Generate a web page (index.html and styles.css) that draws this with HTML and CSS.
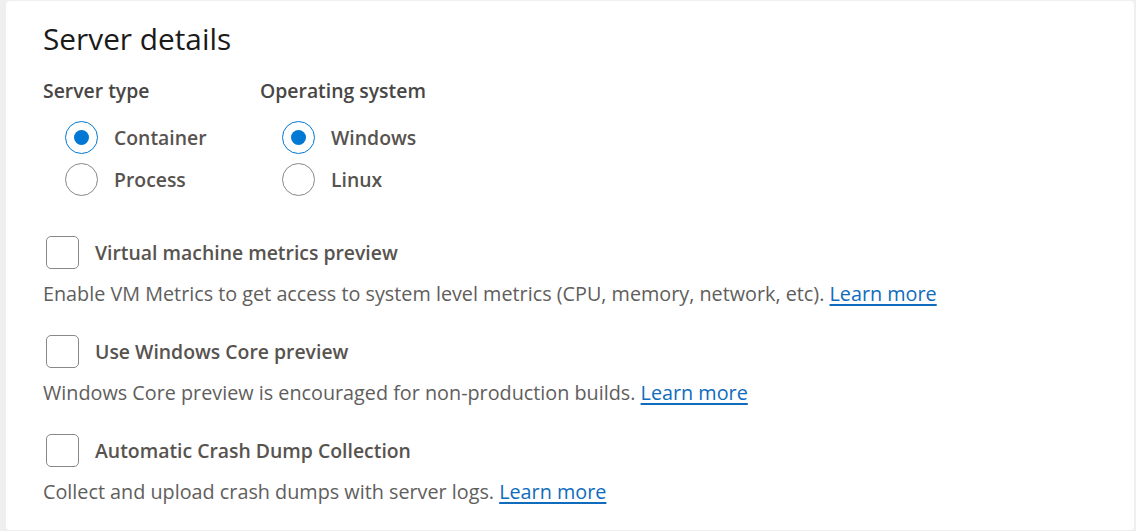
FILE: index.html
```html
<!DOCTYPE html>
<html lang="en">
<head>
<meta charset="utf-8">
<title>Server details</title>
<link rel="stylesheet" href="styles.css">
</head>
<body>
<main class="card">
  <h1 class="title">Server details</h1>
  <div class="groups">
    <div class="group">
      <div class="group-label">Server type</div>
      <div class="radio-list">
        <label class="radio"><span class="circle checked"></span><span class="radio-text">Container</span></label>
        <label class="radio"><span class="circle"></span><span class="radio-text">Process</span></label>
      </div>
    </div>
    <div class="group">
      <div class="group-label">Operating system</div>
      <div class="radio-list">
        <label class="radio"><span class="circle checked"></span><span class="radio-text">Windows</span></label>
        <label class="radio"><span class="circle"></span><span class="radio-text">Linux</span></label>
      </div>
    </div>
  </div>

  <div class="option">
    <label class="check"><span class="box"></span><span class="check-text">Virtual machine metrics preview</span></label>
    <p class="desc">Enable VM Metrics to get access to system level metrics (CPU, memory, network, etc). <a href="#" class="link">Learn more</a></p>
  </div>
  <div class="option">
    <label class="check"><span class="box"></span><span class="check-text">Use Windows Core preview</span></label>
    <p class="desc">Windows Core preview is encouraged for non-production builds. <a href="#" class="link">Learn more</a></p>
  </div>
  <div class="option">
    <label class="check"><span class="box"></span><span class="check-text">Automatic Crash Dump Collection</span></label>
    <p class="desc">Collect and upload crash dumps with server logs. <a href="#" class="link">Learn more</a></p>
  </div>
</main>
</body>
</html>
```

FILE: styles.css
```css
* { box-sizing: border-box; }

html, body {
  margin: 0;
  padding: 0;
  background: #efefef;
  font-family: "Open Sans", "Noto Sans", Arial, sans-serif;
}

.card {
  margin: 1px 2px 0 6px;
  height: 529px;
  background: #ffffff;
  border-radius: 4px;
  padding: 18px 37px 0 37px;
  overflow: hidden;
}

.title {
  margin: 0;
  font-size: 29.8px;
  font-weight: 400;
  line-height: 40px;
  color: #1b1a19;
}

.groups {
  display: flex;
  margin-top: 19px;
}

.group:first-child {
  width: 217px;
}

.group-label {
  font-size: 19.4px;
  font-weight: 600;
  line-height: 26px;
  color: #484644;
}

.radio-list {
  display: flex;
  flex-direction: column;
  gap: 9px;
  margin-top: 17px;
  padding-left: 22px;
}

.radio {
  display: flex;
  align-items: center;
  gap: 16px;
  height: 33px;
}

.circle {
  width: 33px;
  height: 33px;
  border-radius: 50%;
  border: 1px solid #8a8886;
  display: flex;
  align-items: center;
  justify-content: center;
  flex: none;
}

.circle.checked {
  border-color: #0078d4;
}

.circle.checked::after {
  content: "";
  width: 15px;
  height: 15px;
  border-radius: 50%;
  background: #0078d4;
}

.radio-text, .check-text {
  font-size: 19.4px;
  font-weight: 600;
  color: #57534f;
}

.option {
  margin-top: 40px;
}

.option + .option {
  margin-top: 27px;
}

.check {
  display: flex;
  align-items: center;
  gap: 16px;
  padding-left: 3px;
  height: 33px;
}

.box {
  width: 33px;
  height: 33px;
  border: 1px solid #8a8886;
  border-radius: 5px;
  flex: none;
}

.desc {
  margin: 11px 0 0 0;
  font-size: 19.8px;
  line-height: 28px;
  color: #605e5c;
}

.link {
  color: #0f6cbd;
  text-decoration: underline;
  text-decoration-thickness: 2px;
  text-underline-offset: 3px;
}
```
